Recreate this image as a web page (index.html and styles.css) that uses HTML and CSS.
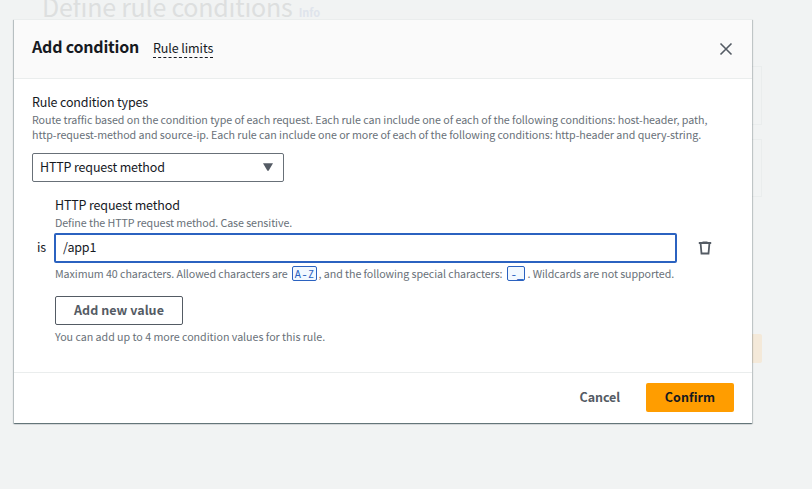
FILE: index.html
```
<!DOCTYPE html>
<html lang="en">
<head>
<meta charset="utf-8">
<title>Add condition</title>
<link rel="stylesheet" href="styles.css">
</head>
<body>
<div class="page">
  <h1 class="page-title">Define rule conditions <span class="info">Info</span></h1>
  <div class="panel panel-first"></div>
  <div class="panel panel-second"></div>
  <div class="page-action"></div>
</div>
<section class="modal" role="dialog">
  <header class="modal-header">
    <h2 class="title">Add condition</h2>
    <a class="limits">Rule limits</a>
    <svg class="close" width="14" height="14" viewBox="0 0 14 14"><path d="M1.5 1.5l11 11M12.5 1.5l-11 11"/></svg>
  </header>
  <div class="modal-body">
    <div class="label">Rule condition types</div>
    <div class="hint intro"><span>Route traffic based on the condition type of each request. Each rule can include one of each of the following conditions: host-header, path,</span><br><span>http-request-method and source-ip. Each rule can include one or more of each of the following conditions: http-header and query-string.</span></div>
    <div class="select"><span>HTTP request method</span><svg width="10" height="8" viewBox="0 0 10 8"><path d="M0 .3h10L5.6 7.7H4.4z"/></svg></div>
    <div class="condition">
      <div class="label method-label">HTTP request method</div>
      <div class="hint method-hint">Define the HTTP request method. Case sensitive.</div>
      <div class="row">
        <span class="is">is</span>
        <div class="input">/app1</div>
        <svg class="trash" width="14" height="14" viewBox="0 0 14 14"><path d="M.8 2h12.4M4.5 1.3h5M2.6 2.5l.9 10h7l.9-10"/></svg>
      </div>
      <div class="hint constraint"><span>Maximum 40 characters. Allowed characters are</span><code class="range">A-Z</code><span class="mid">, and the following special characters:</span><code class="special">-_</code><span>. Wildcards are not supported.</span></div>
      <div class="add">Add new value</div>
      <div class="hint count">You can add up to 4 more condition values for this rule.</div>
    </div>
  </div>
  <footer class="modal-footer">
    <div class="cancel">Cancel</div>
    <div class="confirm">Confirm</div>
  </footer>
</section>
</body>
</html>
```
FILE: styles.css
```
* { box-sizing: border-box; }

body {
  margin: 0;
  height: 489px;
  overflow: hidden;
  position: relative;
  background: #f1f3f3;
  color: #16191f;
  font: 12.5px/20px "Noto Sans CJK SC", "Noto Sans", sans-serif;
  letter-spacing: -.16px;
  white-space: nowrap;
}

.page { width: 762px; height: 489px; }

.page-title {
  margin: 0 0 0 42px;
  height: 66px;
  font-size: 25px;
  font-weight: 400;
  line-height: 13px;
  letter-spacing: -.23px;
  color: #dddfdf;
}

.info {
  margin-left: 1px;
  font-size: 11px;
  font-weight: 700;
  letter-spacing: -.1px;
  color: #dfe4ec;
}

.panel { border: 1px solid #eaeded; }
.panel, .page-action { margin-left: 42px; }
.panel-first { height: 59px; }
.panel-second { height: 58px; margin-top: 14px; }
.page-action { height: 29px; margin-top: 137px; margin-left: 660px; background: #f4e9d9; border-radius: 2px; }

.modal {
  position: absolute;
  left: 14px;
  top: 19px;
  width: 738px;
  height: 404px;
  display: flex;
  flex-direction: column;
  background: #fff;
  box-shadow: 0 1px 1px 0 rgba(0, 28, 36, .4), 1px 1px 1px 0 rgba(0, 28, 36, .15), -1px 1px 1px 0 rgba(0, 28, 36, .18);
}

.modal-header {
  height: 60px;
  padding: 0 19px 0 18px;
  display: flex;
  align-items: center;
  background: #fafafa;
  border-top: 1px solid #eaeded;
  border-bottom: 1px solid #eaeded;
}

.title {
  margin: 0 14px 7px 0;
  width: 107px;
  font-size: 16px;
  font-weight: 700;
  letter-spacing: -.2px;
}

.limits {
  margin-bottom: 2px;
  padding-bottom: 1px;
  line-height: 17px;
  border-bottom: 1px dashed #16191f;
  letter-spacing: -.1px;
}

.close {
  margin-left: auto;
  fill: none;
  stroke: #545b64;
  stroke-width: 1.6;
}

.modal-body { flex: 1; padding: 13px 18px 0; }
.label { line-height: 20px; }

.hint {
  font-size: 10.7px;
  line-height: 15px;
  letter-spacing: -.06px;
  color: #687078;
}

.intro { letter-spacing: -.055px; }

.select {
  width: 252px;
  height: 29px;
  margin-top: 11px;
  padding: 0 10px 1px 7px;
  display: flex;
  align-items: center;
  justify-content: space-between;
  border: 1px solid #687078;
  border-radius: 2px;
}

.select svg { fill: #545b64; }
.condition { margin: 13px 0 0 23px; }
.method-hint { letter-spacing: -.08px; }

.row {
  display: flex;
  align-items: center;
  height: 30px;
  margin: 3px 0 0 -18px;
}

.is { width: 17px; padding-bottom: 2px; }

.input {
  width: 623px;
  height: 30px;
  padding: 0 7px;
  line-height: 24px;
  border: 2px solid #2b62c0;
  border-radius: 2px;
}

.trash {
  margin-left: 21px;
  fill: none;
  stroke: #545b64;
  stroke-width: 1.8;
}

.constraint { display: flex; align-items: center; margin-top: 1px; height: 19px; letter-spacing: -.08px; }
.constraint span { padding-bottom: 1px; }

code {
  height: 15px;
  padding: 0 2px;
  font: 11px/13px "Noto Sans Mono", "DejaVu Sans Mono", monospace;
  color: #2b62c0;
  background: #f1f8ff;
  border: 1px solid #2b62c0;
  border-radius: 2px;
  letter-spacing: 0;
}

.range { width: 25px; margin: 0 2px 0 4px; }
.special { width: 18px; margin: 0 2px 0 5px; }

.add {
  width: 128px;
  height: 29px;
  margin: 13px 0 4px;
  border: 1px solid #545b64;
  border-radius: 2px;
  font-weight: 700;
  line-height: 25px;
  letter-spacing: .05px;
  text-align: center;
  color: #545b64;
}

.count { letter-spacing: -.03px; }

.modal-footer {
  height: 51px;
  padding: 0 18px 2px;
  display: flex;
  align-items: center;
  justify-content: flex-end;
  border-top: 1px solid #eaeded;
  font-weight: 700;
  letter-spacing: .05px;
}

.cancel { margin-right: 26px; letter-spacing: -.1px; color: #545b64; }

.confirm {
  width: 88px;
  height: 29px;
  line-height: 28px;
  text-align: center;
  background: #ff9d00;
  border-radius: 2px;
}
```
